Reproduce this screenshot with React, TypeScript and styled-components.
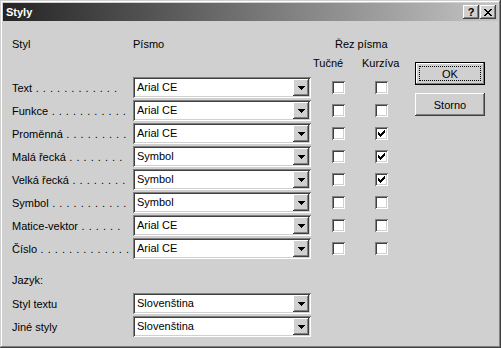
import React from "react";
import styled, { createGlobalStyle, css } from "styled-components";

const face = "#d0d0d0";

const GlobalStyle = createGlobalStyle`
  html, body {
    margin: 0;
    padding: 0;
    background: ${face};
  }
  body {
    font-family: "Liberation Sans", Arial, sans-serif;
    font-size: 11px;
    color: #000;
  }
`;

const raised = css`
  box-shadow: inset -1px -1px #404040, inset 1px 1px #fff,
    inset -2px -2px #808080, inset 2px 2px ${face};
`;

const sunken = css`
  box-shadow: inset 1px 1px #808080, inset -1px -1px #fff,
    inset 2px 2px #404040, inset -2px -2px ${face};
`;

const Window = styled.div`
  width: 501px;
  height: 348px;
  box-sizing: border-box;
  padding: 3px;
  background: ${face};
  box-shadow: inset -1px -1px #404040, inset 1px 1px ${face},
    inset -2px -2px #808080, inset 2px 2px #fff;
  display: flex;
  flex-direction: column;
`;

const TitleBar = styled.div`
  height: 18px;
  display: flex;
  align-items: center;
  padding: 0 2px 0 2px;
  background: linear-gradient(to right, #242424, #c4c4c4);
`;

const TitleText = styled.div`
  flex: 1;
  color: #fff;
  font-weight: bold;
  font-size: 11px;
  padding-left: 1px;
`;

const TitleButton = styled.div`
  width: 16px;
  height: 14px;
  box-sizing: border-box;
  margin-left: 1px;
  background: ${face};
  ${raised};
  display: flex;
  align-items: center;
  justify-content: center;
  font-weight: bold;
  font-size: 11px;
  line-height: 14px;
`;

const Body = styled.div`
  display: flex;
  align-items: flex-start;
  padding: 17px 0 0 9px;
`;

const Form = styled.div`
  display: flex;
  flex-direction: column;
`;

const Columns = styled.div`
  display: grid;
  grid-template-columns: 121px 178px 43px 43px;
`;

const HeadRow = styled(Columns)<{ $gap?: number }>`
  height: 13px;
  line-height: 13px;
  margin-top: ${(p) => p.$gap ?? 0}px;
  white-space: nowrap;
`;

const Head = styled.div<{ $col: string; $indent?: number }>`
  grid-column: ${(p) => p.$col};
  padding-left: ${(p) => p.$indent ?? 0}px;
`;

const Rows = styled(Columns)<{ $gap: number }>`
  margin-top: ${(p) => p.$gap}px;
  grid-auto-rows: 21px;
  row-gap: 2px;
  align-items: center;
`;

const LangRows = styled(Rows)`
  grid-template-columns: 121px 178px;
`;

const Label = styled.div`
  white-space: nowrap;
`;

const Leader = styled.span`
  letter-spacing: 0.5px;
`;

const Combo = styled.div`
  width: 178px;
  height: 21px;
  box-sizing: border-box;
  background: #fff;
  ${sunken};
  display: flex;
  align-items: center;
  padding: 2px;
`;

const ComboText = styled.div`
  flex: 1;
  padding-left: 2px;
  line-height: 17px;
`;

const DropButton = styled.div`
  width: 16px;
  height: 17px;
  box-sizing: border-box;
  background: ${face};
  ${raised};
  display: flex;
  align-items: center;
  justify-content: center;
`;

const Check = styled.div`
  width: 13px;
  height: 13px;
  box-sizing: border-box;
  margin-left: 21px;
  background: #fff;
  ${sunken};
  display: flex;
  align-items: center;
  justify-content: center;
`;

const SectionLabel = styled.div`
  margin-top: 15px;
  height: 13px;
  line-height: 13px;
`;

const ButtonColumn = styled.div`
  display: flex;
  flex-direction: column;
  gap: 8px;
  margin: 24px 0 0 18px;
`;

const Button = styled.div<{ $default?: boolean }>`
  width: 70px;
  height: 23px;
  box-sizing: border-box;
  position: relative;
  display: flex;
  align-items: center;
  justify-content: center;
  background: ${face};
  ${(p) =>
    p.$default
      ? css`
          box-shadow: inset 0 0 0 1px #000, inset -2px -2px #808080,
            inset 2px 2px #fff;
        `
      : raised};
`;

const Focus = styled.div`
  position: absolute;
  inset: 4px;
  border: 1px dotted #000;
`;

const Arrow = () => (
  <svg width="7" height="4" viewBox="0 0 7 4" shapeRendering="crispEdges">
    <polygon points="0,0 7,0 3.5,4" fill="#000" />
  </svg>
);

const Tick = () => (
  <svg width="7" height="7" viewBox="0 0 7 7" shapeRendering="crispEdges">
    <path
      d="M6 0h1v3h-1v1h-1v1h-1v1h-1v1h-1v-1h-1v-1h-1v-3h1v1h1v1h1v-1h1v-1h1z"
      fill="#000"
    />
  </svg>
);

const Close = () => (
  <svg width="8" height="7" viewBox="0 0 8 7" shapeRendering="crispEdges">
    <path
      d="M0 0h2v1h1v1h2v-1h1v-1h2v1h-1v1h-1v1h-1v1h1v1h1v1h1v1h-2v-1h-1v-1h-2v1h-1v1h-2v-1h1v-1h1v-1h1v-1h-1v-1h-1v-1h-1z"
      fill="#000"
    />
  </svg>
);

type Style = {
  name: string;
  dots: number;
  font: string;
  bold: boolean;
  italic: boolean;
};

const styles: Style[] = [
  { name: "Text", dots: 12, font: "Arial CE", bold: false, italic: false },
  { name: "Funkce", dots: 11, font: "Arial CE", bold: false, italic: false },
  { name: "Proměnná", dots: 9, font: "Arial CE", bold: false, italic: true },
  { name: "Malá řecká", dots: 8, font: "Symbol", bold: false, italic: true },
  { name: "Velká řecká", dots: 8, font: "Symbol", bold: false, italic: true },
  { name: "Symbol", dots: 11, font: "Symbol", bold: false, italic: false },
  { name: "Matice-vektor", dots: 6, font: "Arial CE", bold: false, italic: false },
  { name: "Číslo", dots: 13, font: "Arial CE", bold: false, italic: false },
];

const languages = [
  { name: "Styl textu", value: "Slovenština" },
  { name: "Jiné styly", value: "Slovenština" },
];

const Select = ({ value }: { value: string }) => (
  <Combo>
    <ComboText>{value}</ComboText>
    <DropButton>
      <Arrow />
    </DropButton>
  </Combo>
);

export default function App() {
  return (
    <>
      <GlobalStyle />
      <Window>
        <TitleBar>
          <TitleText>Styly</TitleText>
          <TitleButton>?</TitleButton>
          <TitleButton>
            <Close />
          </TitleButton>
        </TitleBar>
        <Body>
          <Form>
            <HeadRow>
              <Head $col="1">Styl</Head>
              <Head $col="2">Písmo</Head>
              <Head $col="3 / span 2" $indent={24}>
                Řez písma
              </Head>
            </HeadRow>
            <HeadRow $gap={6}>
              <Head $col="3" $indent={2}>
                Tučné
              </Head>
              <Head $col="4" $indent={8}>
                Kurzíva
              </Head>
            </HeadRow>
            <Rows $gap={7}>
              {styles.map((s) => (
                <React.Fragment key={s.name}>
                  <Label>
                    {s.name}
                    <Leader>{" .".repeat(s.dots)}</Leader>
                  </Label>
                  <Select value={s.font} />
                  <Check>{s.bold && <Tick />}</Check>
                  <Check>{s.italic && <Tick />}</Check>
                </React.Fragment>
              ))}
            </Rows>
            <SectionLabel>Jazyk:</SectionLabel>
            <LangRows $gap={6}>
              {languages.map((l) => (
                <React.Fragment key={l.name}>
                  <Label>{l.name}</Label>
                  <Select value={l.value} />
                </React.Fragment>
              ))}
            </LangRows>
          </Form>
          <ButtonColumn>
            <Button $default>
              <Focus />
              OK
            </Button>
            <Button>Storno</Button>
          </ButtonColumn>
        </Body>
      </Window>
    </>
  );
}
